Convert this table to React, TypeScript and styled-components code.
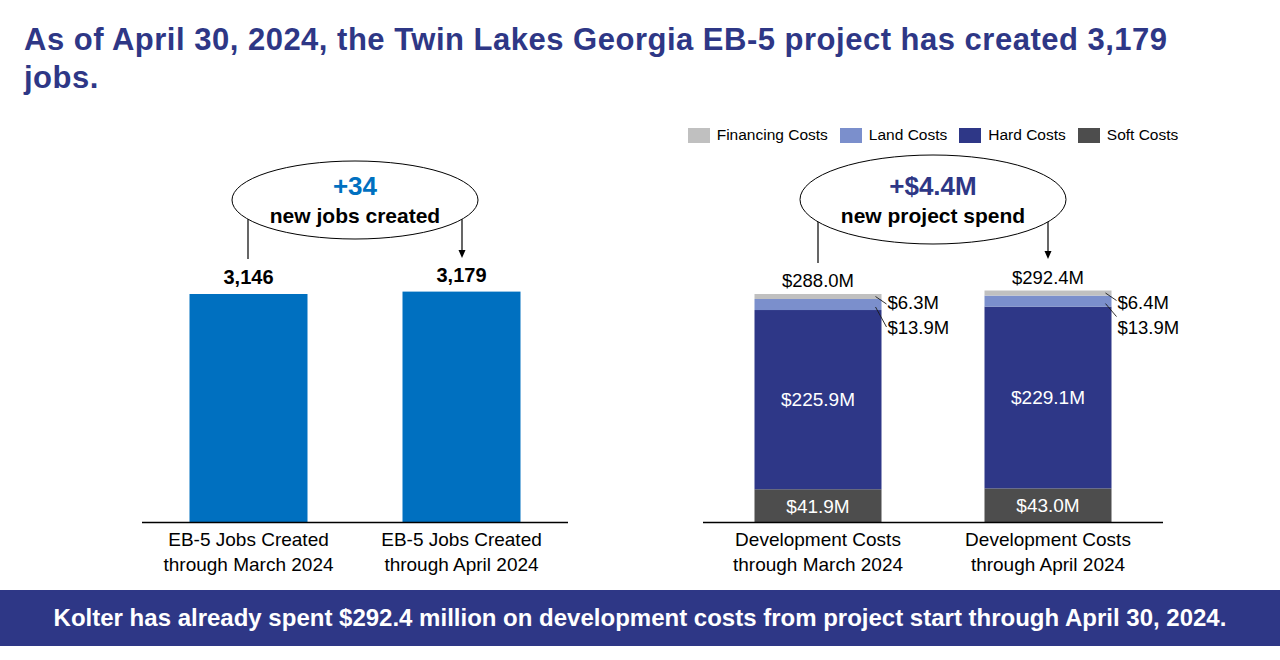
import React from 'react';
import styled, { createGlobalStyle } from 'styled-components';

const NAVY = '#2E3786';
const JOBS_BLUE = '#0070C0';
const AXIS_Y = 371.5;
const PLOT_H = 373;

const GlobalStyle = createGlobalStyle`
  html, body {
    margin: 0;
    padding: 0;
    background: #fff;
  }
  body {
    font-family: 'Liberation Sans', Arial, sans-serif;
    color: #000;
  }
`;

interface JobsBar {
  label: string[];
  value: number;
}

interface CostBar {
  label: string[];
  financing: number;
  land: number;
  hard: number;
  soft: number;
}

const jobs: JobsBar[] = [
  { label: ['EB-5 Jobs Created', 'through March 2024'], value: 3146 },
  { label: ['EB-5 Jobs Created', 'through April 2024'], value: 3179 },
];

const costs: CostBar[] = [
  { label: ['Development Costs', 'through March 2024'], financing: 6.3, land: 13.9, hard: 225.9, soft: 41.9 },
  { label: ['Development Costs', 'through April 2024'], financing: 6.4, land: 13.9, hard: 229.1, soft: 43.0 },
];

const legend = [
  { name: 'Financing Costs', color: '#C0C0C0' },
  { name: 'Land Costs', color: '#7B8FCC' },
  { name: 'Hard Costs', color: '#2E3787' },
  { name: 'Soft Costs', color: '#4D4D4D' },
];

const money = (v: number) => `$${v.toFixed(1)}M`;

interface CalloutProps {
  cx: number;
  cy: number;
  rx: number;
  ry: number;
  headline: string;
  caption: string;
  color: string;
  leftX: number;
  leftEnd: number;
  rightX: number;
  arrowTip: number;
}

const Callout: React.FC<CalloutProps> = ({ cx, cy, rx, ry, headline, caption, color, leftX, leftEnd, rightX, arrowTip }) => {
  const edge = (x: number) => cy + ry * Math.sqrt(1 - ((x - cx) / rx) ** 2);
  return (
    <g>
      <Leader x1={leftX} y1={edge(leftX)} x2={leftX} y2={leftEnd} />
      <Leader x1={rightX} y1={edge(rightX)} x2={rightX} y2={arrowTip - 7} />
      <polygon points={`${rightX - 3.5},${arrowTip - 8} ${rightX + 3.5},${arrowTip - 8} ${rightX},${arrowTip}`} fill="#000" />
      <Bubble cx={cx} cy={cy} rx={rx} ry={ry} />
      <Headline x={cx} y={cy - 5} $color={color}>{headline}</Headline>
      <BubbleCaption x={cx} y={cy + 23}>{caption}</BubbleCaption>
    </g>
  );
};

const JobsChart: React.FC = () => {
  const width = 426;
  const barW = 118;
  const scale = 228.5 / 3146;
  return (
    <Plot width={width} height={PLOT_H}>
      <Callout
        cx={213}
        cy={49}
        rx={123}
        ry={39}
        headline="+34"
        caption="new jobs created"
        color={JOBS_BLUE}
        leftX={106}
        leftEnd={108}
        rightX={320}
        arrowTip={107}
      />
      {jobs.map((bar, i) => {
        const center = (width / 4) * (i * 2 + 1);
        const h = bar.value * scale;
        return (
          <g key={i}>
            <rect x={center - barW / 2} y={AXIS_Y - h} width={barW} height={h} fill={JOBS_BLUE} />
            <JobsValue x={center} y={AXIS_Y - h - 10}>
              {bar.value.toLocaleString('en-US')}
            </JobsValue>
          </g>
        );
      })}
      <Axis x1={0} x2={width} y1={AXIS_Y} y2={AXIS_Y} />
    </Plot>
  );
};

const CostChart: React.FC = () => {
  const width = 460;
  const barW = 127;
  const scale = 228.5 / 288;
  return (
    <Plot width={width} height={PLOT_H}>
      <Callout
        cx={230}
        cy={48.5}
        rx={133}
        ry={44.5}
        headline="+$4.4M"
        caption="new project spend"
        color={NAVY}
        leftX={115}
        leftEnd={112}
        rightX={345}
        arrowTip={108}
      />
      {costs.map((bar, i) => {
        const center = (width / 4) * (i * 2 + 1);
        const x = center - barW / 2;
        const soft = bar.soft * scale;
        const hard = bar.hard * scale;
        const land = bar.land * scale;
        const fin = bar.financing * scale;
        const softTop = AXIS_Y - soft;
        const hardTop = softTop - hard;
        const landTop = hardTop - land;
        const finTop = landTop - fin;
        const total = bar.soft + bar.hard + bar.land + bar.financing;
        const sideX = x + barW + 6;
        return (
          <g key={i}>
            <rect x={x} y={softTop} width={barW} height={soft} fill={legend[3].color} />
            <rect x={x} y={hardTop} width={barW} height={hard} fill={legend[2].color} />
            <rect x={x} y={landTop} width={barW} height={land} fill={legend[1].color} />
            <rect x={x} y={finTop} width={barW} height={fin} fill={legend[0].color} />
            <CostValue x={center} y={finTop - 7}>{money(total)}</CostValue>
            <InnerValue x={center} y={(softTop + hardTop) / 2 + 6.5}>{money(bar.hard)}</InnerValue>
            <InnerValue x={center} y={(AXIS_Y + softTop) / 2 + 7}>{money(bar.soft)}</InnerValue>
            <Tick x1={x + barW - 6} y1={finTop + 2.5} x2={sideX - 1} y2={finTop + 10} />
            <Tick x1={x + barW - 6} y1={landTop + 8} x2={sideX - 1} y2={landTop + 8 + (i === 0 ? 20 : 13)} />
            <CostValue x={sideX} y={158} $align="start">{money(bar.financing)}</CostValue>
            <CostValue x={sideX} y={183} $align="start">{money(bar.land)}</CostValue>
          </g>
        );
      })}
      <Axis x1={0} x2={width} y1={AXIS_Y} y2={AXIS_Y} />
    </Plot>
  );
};

const App: React.FC = () => (
  <Page>
    <GlobalStyle />
    <Title>As of April 30, 2024, the Twin Lakes Georgia EB-5 project has created 3,179 jobs.</Title>
    <ChartsRow>
      <Panel $width={426}>
        <LegendRow />
        <JobsChart />
        <Captions $width={426}>
          {jobs.map((bar, i) => (
            <Caption key={i}>
              {bar.label[0]}
              <br />
              {bar.label[1]}
            </Caption>
          ))}
        </Captions>
      </Panel>
      <Panel $width={510}>
        <LegendRow>
          {legend.map(item => (
            <LegendItem key={item.name}>
              <Swatch $color={item.color} />
              {item.name}
            </LegendItem>
          ))}
        </LegendRow>
        <CostChart />
        <Captions $width={460}>
          {costs.map((bar, i) => (
            <Caption key={i}>
              {bar.label[0]}
              <br />
              {bar.label[1]}
            </Caption>
          ))}
        </Captions>
      </Panel>
    </ChartsRow>
    <Banner>Kolter has already spent $292.4 million on development costs from project start through April 30, 2024.</Banner>
  </Page>
);

export default App;

const Page = styled.div`
  width: 1280px;
  height: 660px;
  display: flex;
  flex-direction: column;
  overflow: hidden;
  background: #fff;
`;

const Title = styled.h1`
  margin: 21px 0 0 24px;
  max-width: 1170px;
  font-size: 31px;
  line-height: 38px;
  letter-spacing: 0.5px;
  font-weight: 700;
  color: ${NAVY};
`;

const ChartsRow = styled.div`
  display: flex;
  gap: 110px;
  padding-left: 142px;
  margin-top: 28px;
`;

const Panel = styled.div<{ $width: number }>`
  width: ${p => p.$width}px;
  display: flex;
  flex-direction: column;
  align-items: center;
`;

const LegendRow = styled.div`
  height: 20px;
  display: flex;
  align-items: center;
  gap: 12px;
  margin-bottom: 6px;
`;

const LegendItem = styled.div`
  display: flex;
  align-items: center;
  gap: 7px;
  font-size: 15.5px;
  white-space: nowrap;
`;

const Swatch = styled.span<{ $color: string }>`
  width: 22px;
  height: 15px;
  background: ${p => p.$color};
`;

const Plot = styled.svg`
  display: block;
  overflow: visible;
  font-family: 'Liberation Sans', Arial, sans-serif;
`;

const Bubble = styled.ellipse`
  fill: #fff;
  stroke: #000;
  stroke-width: 1;
`;

const Leader = styled.line`
  stroke: #000;
  stroke-width: 1.2;
`;

const Tick = styled.line`
  stroke: #1a1a1a;
  stroke-width: 0.9;
`;

const Axis = styled.line`
  stroke: #000;
  stroke-width: 1.3;
`;

const Headline = styled.text<{ $color: string }>`
  fill: ${p => p.$color};
  font-size: 26px;
  font-weight: 700;
  text-anchor: middle;
`;

const BubbleCaption = styled.text`
  fill: #000;
  font-size: 21px;
  font-weight: 700;
  text-anchor: middle;
`;

const JobsValue = styled.text`
  fill: #000;
  font-size: 20px;
  font-weight: 700;
  text-anchor: middle;
`;

const CostValue = styled.text<{ $align?: 'start' | 'middle' }>`
  fill: #000;
  font-size: 18.5px;
  text-anchor: ${p => p.$align ?? 'middle'};
`;

const InnerValue = styled.text`
  fill: #fff;
  font-size: 19px;
  text-anchor: middle;
`;

const Captions = styled.div<{ $width: number }>`
  width: ${p => p.$width}px;
  display: grid;
  grid-template-columns: 1fr 1fr;
  margin-top: 3px;
`;

const Caption = styled.div`
  text-align: center;
  font-size: 19px;
  line-height: 25px;
  white-space: nowrap;
`;

const Banner = styled.div`
  margin-top: auto;
  margin-bottom: 14px;
  height: 56px;
  background: ${NAVY};
  color: #fff;
  display: flex;
  align-items: center;
  justify-content: center;
  font-size: 24px;
  font-weight: 700;
  white-space: nowrap;
`;
